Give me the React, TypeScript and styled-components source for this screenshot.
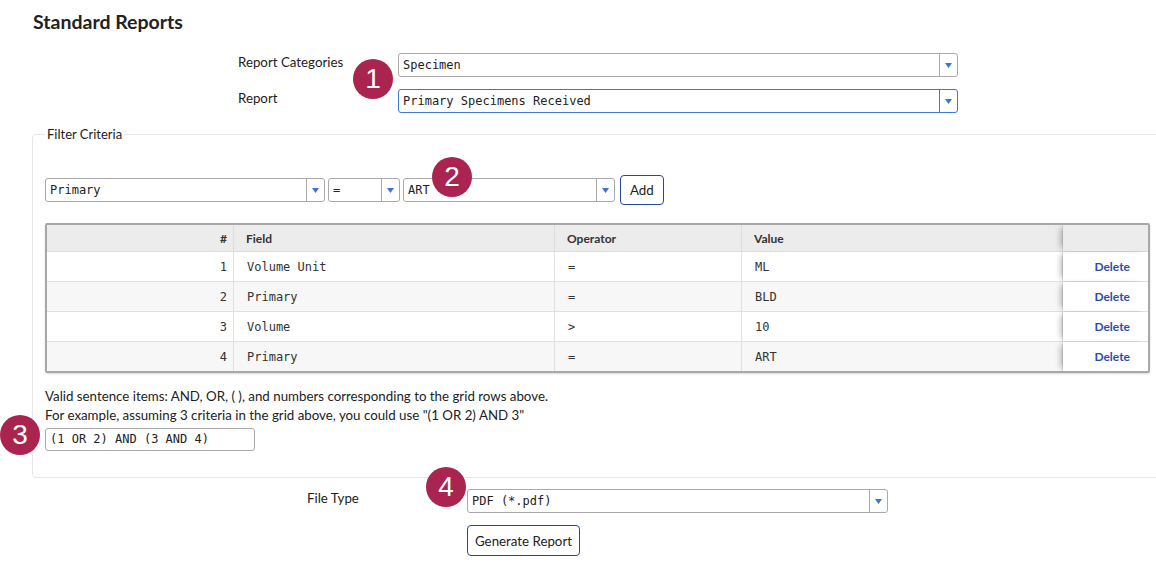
import styled, { createGlobalStyle } from "styled-components";

const GlobalStyle = createGlobalStyle`
  html, body {
    margin: 0;
    padding: 0;
    background: #fff;
    overflow-x: hidden;
  }
  body {
    font-family: Lato, "Noto Sans", sans-serif;
    color: #222;
  }
`;

interface Criterion {
  id: number;
  field: string;
  operator: string;
  value: string;
}

const criteria: Criterion[] = [
  { id: 1, field: "Volume Unit", operator: "=", value: "ML" },
  { id: 2, field: "Primary", operator: "=", value: "BLD" },
  { id: 3, field: "Volume", operator: ">", value: "10" },
  { id: 4, field: "Primary", operator: "=", value: "ART" },
];

const Arrow = () => (
  <svg width="7" height="5" viewBox="0 0 7 5">
    <path d="M0 0 L7 0 L3.5 5 Z" fill="#3c74d6" />
  </svg>
);

interface DropdownProps {
  value: string;
  width: number;
  focused?: boolean;
}

const Dropdown = ({ value, width, focused }: DropdownProps) => (
  <SelectBox $width={width} $focused={focused}>
    <SelectText>{value}</SelectText>
    <SelectButton $focused={focused}>
      <Arrow />
    </SelectButton>
  </SelectBox>
);

export default function App() {
  return (
    <Page>
      <GlobalStyle />
      <Title>Standard Reports</Title>

      <TopForm>
        <Label>Report Categories</Label>
        <Dropdown value="Specimen" width={560} />
        <Label>Report</Label>
        <Dropdown value="Primary Specimens Received" width={560} focused />
      </TopForm>

      <Fieldset>
        <Legend>Filter Criteria</Legend>
        <FilterRow>
          <Dropdown value="Primary" width={280} />
          <Dropdown value="=" width={72} />
          <Dropdown value="ART" width={212} />
          <Button>Add</Button>
        </FilterRow>

        <Grid>
          <HeaderRow>
            <HeadCell $align="right">#</HeadCell>
            <HeadCell>Field</HeadCell>
            <HeadCell>Operator</HeadCell>
            <HeadCell>Value</HeadCell>
            <ActionHead />
          </HeaderRow>
          {criteria.map((c) => (
            <Row key={c.id} $striped={c.id % 2 === 0}>
              <Cell $align="right">{c.id}</Cell>
              <Cell>{c.field}</Cell>
              <Cell>{c.operator}</Cell>
              <Cell>{c.value}</Cell>
              <ActionCell>
                <DeleteLink>Delete</DeleteLink>
              </ActionCell>
            </Row>
          ))}
        </Grid>

        <Help>
          Valid sentence items: AND, OR, ( ), and numbers corresponding to the grid rows above.
          <br />
          For example, assuming 3 criteria in the grid above, you could use "(1 OR 2) AND 3"
        </Help>
        <SentenceInput>(1 OR 2) AND (3 AND 4)</SentenceInput>
      </Fieldset>

      <BottomForm>
        <Label>File Type</Label>
        <Dropdown value="PDF (*.pdf)" width={421} />
        <span />
        <GenerateButton>Generate Report</GenerateButton>
      </BottomForm>

      <Badge $x={373} $y={79}>1</Badge>
      <Badge $x={452} $y={177}>2</Badge>
      <Badge $x={20} $y={435}>3</Badge>
      <Badge $x={446} $y={487}>4</Badge>
    </Page>
  );
}

const Page = styled.div`
  position: relative;
  width: 1156px;
  height: 570px;
  padding: 11px 0 0 32px;
  box-sizing: border-box;
`;

const Title = styled.h1`
  margin: 0 0 0 1px;
  font-size: 19.5px;
  font-weight: 700;
  line-height: 22px;
  color: #222;
`;

const TopForm = styled.div`
  display: grid;
  grid-template-columns: 160px 560px;
  row-gap: 12px;
  margin: 20px 0 0 206px;
  align-items: center;
`;

const Label = styled.div`
  font-size: 13.3px;
  color: #222;
  margin-top: -6px;
`;

const SelectBox = styled.div<{ $width: number; $focused?: boolean }>`
  display: flex;
  width: ${(p) => p.$width}px;
  height: 24px;
  box-sizing: border-box;
  border: 1px solid ${(p) => (p.$focused ? "#3d78d8" : "#aaa")};
  border-radius: 3px;
  background: #fff;
`;

const SelectText = styled.div`
  flex: 1;
  padding-left: 4px;
  font-family: "DejaVu Sans Mono", "Liberation Mono", monospace;
  font-size: 12px;
  line-height: 22px;
  color: #222;
  white-space: nowrap;
  overflow: hidden;
`;

const SelectButton = styled.div<{ $focused?: boolean }>`
  width: 17px;
  display: flex;
  align-items: center;
  justify-content: center;
  border-left: 1px solid ${(p) => (p.$focused ? "#3d78d8" : "#aaa")};
`;

const Fieldset = styled.fieldset`
  margin: 13px -4px 0 0;
  padding: 33px 12px 26px 12px;
  border: 1px solid #e6e6e6;
  border-radius: 4px;
  min-width: 0;
`;

const Legend = styled.legend`
  padding: 0 2px;
  margin-left: 0;
  font-size: 13px;
  color: #222;
`;

const FilterRow = styled.div`
  display: flex;
  align-items: center;
  gap: 3px;
`;

const Button = styled.button`
  margin-left: 2px;
  height: 30px;
  padding: 0 9px;
  background: #fff;
  border: 1px solid #24489c;
  border-radius: 4px;
  font-family: Lato, "Noto Sans", sans-serif;
  font-size: 13.3px;
  color: #222;
`;

const GenerateButton = styled(Button)`
  margin-left: 0;
  width: 113px;
  height: 31px;
  padding: 0;
`;

const Grid = styled.div`
  margin-top: 18px;
  width: 1105px;
  box-sizing: border-box;
  border: 2px solid #a8a8a8;
  border-radius: 2px;
  overflow: hidden;
  box-shadow: 0 1px 2px rgba(0, 0, 0, 0.15);
`;

const columns = "187px 321px 187px 321px 1fr";

const HeaderRow = styled.div`
  display: grid;
  grid-template-columns: ${columns};
  height: 26px;
  background: #ececec;
  border-bottom: 1px solid #dcdcdc;
`;

const Row = styled.div<{ $striped: boolean }>`
  display: grid;
  grid-template-columns: ${columns};
  height: 30px;
  background: ${(p) => (p.$striped ? "#f7f7f7" : "#fff")};
  border-bottom: 1px solid #e0e0e0;
  box-sizing: border-box;
  &:last-child {
    border-bottom: none;
    height: 29px;
  }
`;

const HeadCell = styled.div<{ $align?: "left" | "right" }>`
  display: flex;
  align-items: center;
  justify-content: ${(p) => (p.$align === "right" ? "flex-end" : "flex-start")};
  padding: 0 6px 0 12px;
  border-right: 1px solid #dcdcdc;
  font-size: 12px;
  font-weight: 700;
  color: #333;
`;

const ActionHead = styled.div`
  position: relative;
  background: #ececec;
  box-shadow: -5px 0 6px -3px rgba(0, 0, 0, 0.3);
`;

const Cell = styled.div<{ $align?: "left" | "right" }>`
  display: flex;
  align-items: center;
  justify-content: ${(p) => (p.$align === "right" ? "flex-end" : "flex-start")};
  padding: 0 6px 0 13px;
  border-right: 1px solid #e0e0e0;
  font-family: "DejaVu Sans Mono", "Liberation Mono", monospace;
  font-size: 12px;
  color: #333;
`;

const ActionCell = styled.div`
  display: flex;
  align-items: center;
  justify-content: flex-end;
  padding-right: 18px;
  background: #fff;
  box-shadow: -5px 0 6px -3px rgba(0, 0, 0, 0.3);
`;

const DeleteLink = styled.span`
  font-size: 12px;
  font-weight: 700;
  color: #2d4ea8;
  cursor: pointer;
`;

const Help = styled.div`
  margin-top: 14px;
  font-size: 13.3px;
  line-height: 19px;
  color: #222;
`;

const SentenceInput = styled.div`
  margin-top: 3px;
  width: 210px;
  height: 23px;
  box-sizing: border-box;
  border: 1px solid #aaa;
  border-radius: 3px;
  padding-left: 4px;
  font-family: "DejaVu Sans Mono", "Liberation Mono", monospace;
  font-size: 12px;
  line-height: 21px;
  color: #222;
`;

const BottomForm = styled.div`
  display: grid;
  grid-template-columns: 160px 421px;
  row-gap: 12px;
  margin: 11px 0 0 275px;
  align-items: center;
`;

const Badge = styled.div<{ $x: number; $y: number }>`
  position: absolute;
  left: ${(p) => p.$x - 20}px;
  top: ${(p) => p.$y - 20}px;
  width: 40px;
  height: 40px;
  border-radius: 50%;
  background: #aa2450;
  color: #fff;
  font-family: "Liberation Sans", Arial, sans-serif;
  font-size: 28px;
  line-height: 40px;
  text-align: center;
`;
